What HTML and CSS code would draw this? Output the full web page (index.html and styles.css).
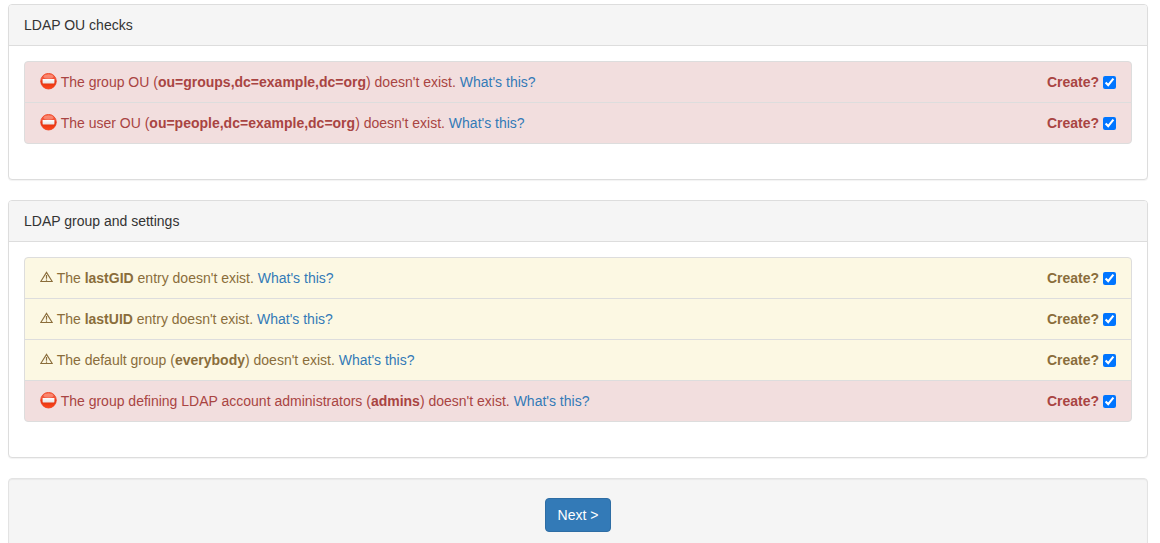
FILE: index.html
```html
<!DOCTYPE html>
<html lang="en">
<head>
<meta charset="utf-8">
<meta name="viewport" content="width=device-width, initial-scale=1">
<title>LDAP setup</title>
<link rel="stylesheet" href="styles.css">
</head>
<body>
<svg class="sprite" aria-hidden="true">
  <defs>
    <linearGradient id="red" x1="0" y1="0" x2="0" y2="1">
      <stop offset="0" stop-color="#fb6a48"/>
      <stop offset=".3" stop-color="#f4573c"/>
      <stop offset=".6" stop-color="#e5320f"/>
      <stop offset="1" stop-color="#ff4a1c"/>
    </linearGradient>
    <linearGradient id="bar" x1="0" y1="0" x2="0" y2="1">
      <stop offset="0" stop-color="#ffffff"/>
      <stop offset="1" stop-color="#e6e2e2"/>
    </linearGradient>
    <symbol id="no-entry" viewBox="0 0 17 17">
      <circle cx="8.5" cy="8.2" r="7.8" fill="url(#red)" stroke="#ee3a1a" stroke-width=".8"/>
      <ellipse cx="8.5" cy="3.6" rx="4.8" ry="2.2" fill="#fff" opacity=".25"/>
      <rect x="2.6" y="6" width="11.8" height="4.4" rx=".4" fill="url(#bar)"/>
    </symbol>
    <symbol id="warning" viewBox="0 0 13 12">
      <path d="M6.5 1.4 12.2 10.5H.8Z" fill="none" stroke="currentColor" stroke-width="1.1"/>
      <path d="M6.5 4v3.8M6.5 8.4v1.3" fill="none" stroke="currentColor" stroke-width="1.2"/>
    </symbol>
  </defs>
</svg>
<main class="container">
  <form>
    <section class="panel">
      <div class="panel-heading">LDAP OU checks</div>
      <div class="panel-body">
        <ul class="list-group">
          <li class="list-item danger">
            <span><svg class="icon-stop" aria-hidden="true"><use href="#no-entry"/></svg> The group OU (<strong>ou=groups,dc=example,dc=org</strong>) doesn't exist. <a href="#">What's this?</a></span>
            <label class="create">Create? <input type="checkbox" name="setup_group_ou" checked></label>
          </li>
          <li class="list-item danger">
            <span><svg class="icon-stop" aria-hidden="true"><use href="#no-entry"/></svg> The user OU (<strong>ou=people,dc=example,dc=org</strong>) doesn't exist. <a href="#">What's this?</a></span>
            <label class="create">Create? <input type="checkbox" name="setup_user_ou" checked></label>
          </li>
        </ul>
      </div>
    </section>
    <section class="panel">
      <div class="panel-heading">LDAP group and settings</div>
      <div class="panel-body">
        <ul class="list-group">
          <li class="list-item warning">
            <span><svg class="icon-warn" aria-hidden="true"><use href="#warning"/></svg> The <strong>lastGID</strong> entry doesn't exist. <a href="#">What's this?</a></span>
            <label class="create">Create? <input type="checkbox" name="setup_last_gid" checked></label>
          </li>
          <li class="list-item warning">
            <span><svg class="icon-warn" aria-hidden="true"><use href="#warning"/></svg> The <strong>lastUID</strong> entry doesn't exist. <a href="#">What's this?</a></span>
            <label class="create">Create? <input type="checkbox" name="setup_last_uid" checked></label>
          </li>
          <li class="list-item warning">
            <span><svg class="icon-warn" aria-hidden="true"><use href="#warning"/></svg> The default group (<strong>everybody</strong>) doesn't exist. <a href="#">What's this?</a></span>
            <label class="create">Create? <input type="checkbox" name="setup_default_group" checked></label>
          </li>
          <li class="list-item danger">
            <span><svg class="icon-stop" aria-hidden="true"><use href="#no-entry"/></svg> The group defining LDAP account administrators (<strong>admins</strong>) doesn't exist. <a href="#">What's this?</a></span>
            <label class="create">Create? <input type="checkbox" name="setup_admins_group" checked></label>
          </li>
        </ul>
      </div>
    </section>
    <div class="well">
      <button class="button" type="submit">Next &gt;</button>
    </div>
  </form>
</main>
</body>
</html>
```
FILE: styles.css
```css
* {
  box-sizing: border-box;
}

body {
  margin: 0;
  background: #fff;
  color: #333;
  font: 14px/20px "Helvetica Neue", Helvetica, "Liberation Sans", Arial, sans-serif;
}

.sprite {
  position: absolute;
  width: 0;
  height: 0;
}

.container {
  padding: 4px 12px 0 8px;
}

.panel {
  margin-bottom: 20px;
  border: 1px solid #ddd;
  border-radius: 4px;
  background: #fff;
  box-shadow: 0 1px 1px rgba(0, 0, 0, .05);
}

.panel-heading {
  padding: 10px 15px;
  border-bottom: 1px solid #ddd;
  border-radius: 3px 3px 0 0;
  background: #f5f5f5;
}

.panel-body {
  padding: 15px;
}

.list-group {
  margin: 0 0 20px;
  padding: 0;
  list-style: none;
}

.list-item {
  display: flex;
  justify-content: space-between;
  gap: 16px;
  margin-bottom: -1px;
  padding: 10px 15px;
  border: 1px solid #ddd;
}

.list-item:first-child {
  border-radius: 4px 4px 0 0;
}

.list-item:last-child {
  margin-bottom: 0;
  border-radius: 0 0 4px 4px;
}

.danger {
  background: #f2dede;
  color: #a94442;
}

.warning {
  background: #fcf8e3;
  color: #8a6d3b;
}

a {
  color: #337ab7;
  text-decoration: none;
}

a:hover {
  text-decoration: underline;
}

.icon-stop {
  width: 17px;
  height: 17px;
  margin: -2px 0;
  vertical-align: -1px;
}

.icon-warn {
  width: 13px;
  height: 12px;
  vertical-align: 0;
}

.create {
  flex: none;
  font-weight: 700;
}

.create input {
  width: 13px;
  height: 13px;
  margin: 0;
  vertical-align: -2px;
}

.well {
  padding: 19px;
  border: 1px solid #e3e3e3;
  border-radius: 4px;
  background: #f5f5f5;
  box-shadow: inset 0 1px 1px rgba(0, 0, 0, .05);
  text-align: center;
}

.button {
  padding: 6px 12px;
  border: 1px solid #2e6da4;
  border-radius: 4px;
  background: #337ab7;
  color: #fff;
  font: inherit;
  cursor: pointer;
}
```
